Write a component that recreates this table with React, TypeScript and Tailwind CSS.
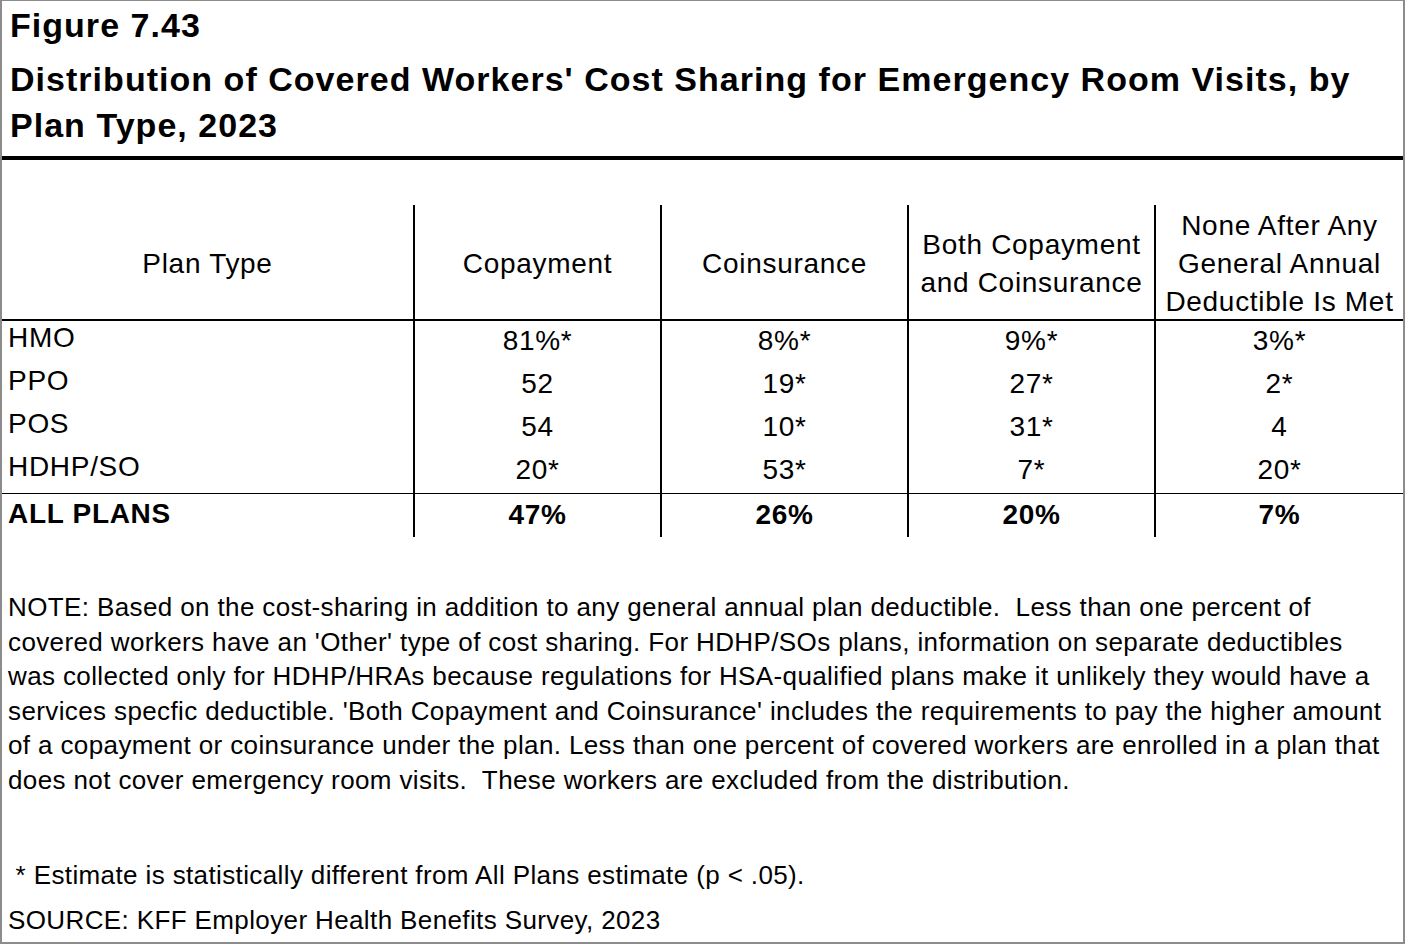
import React from "react";

const rows = [
  { plan: "HMO", cells: ["81%*", "8%*", "9%*", "3%*"] },
  { plan: "PPO", cells: ["52", "19*", "27*", "2*"] },
  { plan: "POS", cells: ["54", "10*", "31*", "4"] },
  { plan: "HDHP/SO", cells: ["20*", "53*", "7*", "20*"] },
];

const totals = ["47%", "26%", "20%", "7%"];

const App = () => {
  return (
    <div className="w-[1405px] h-[944px] bg-white border-l-2 border-r-2 border-t border-b-2 border-[#8c8c8c] font-['Liberation_Sans',Arial,sans-serif] text-black overflow-hidden">
      <div className="pl-[8px] pt-[4px] font-bold text-[34px] tracking-[1.03px]">
        <p className="leading-[40px]">Figure 7.43</p>
        <p className="mt-[11px] leading-[46px]">
          Distribution of Covered Workers' Cost Sharing for Emergency Room Visits, by
          <br />
          Plan Type, 2023
        </p>
      </div>
      <div className="mt-[8px] h-[4px] bg-black" />

      <div className="mt-[45px] grid grid-cols-[411px_247px_247px_247px_1fr] text-[28px] tracking-[0.7px]">
        {/* header */}
        <div className="h-[116px] border-b-2 border-black flex items-center justify-center leading-[38px] pt-[4px]">
          Plan Type
        </div>
        <div className="h-[116px] border-b-2 border-l-2 border-black flex items-center justify-center leading-[38px] pt-[4px]">
          Copayment
        </div>
        <div className="h-[116px] border-b-2 border-l-2 border-black flex items-center justify-center leading-[38px] pt-[4px]">
          Coinsurance
        </div>
        <div className="h-[116px] border-b-2 border-l-2 border-black flex items-center justify-center text-center leading-[38px] pt-[4px]">
          Both Copayment
          <br />
          and Coinsurance
        </div>
        <div className="h-[116px] border-b-2 border-l-2 border-black flex items-center justify-center text-center leading-[38px] pt-[4px]">
          None After Any
          <br />
          General Annual
          <br />
          Deductible Is Met
        </div>

        {rows.map((r) => (
          <React.Fragment key={r.plan}>
            <div className="h-[43px] flex items-center pl-[6px] pb-[10px] leading-[32px]">{r.plan}</div>
            {r.cells.map((c, i) => (
              <div
                key={i}
                className="h-[43px] border-l-2 border-black flex items-center justify-center pb-[4px] leading-[32px]"
              >
                {c}
              </div>
            ))}
          </React.Fragment>
        ))}

        <div className="h-[44px] border-t border-black flex items-center pl-[6px] pb-[4px] font-bold leading-[32px]">
          ALL PLANS
        </div>
        {totals.map((t, i) => (
          <div
            key={i}
            className="h-[44px] border-t border-l-2 border-black flex items-center justify-center pb-[2px] font-bold leading-[32px]"
          >
            {t}
          </div>
        ))}
      </div>

      <div className="mt-[53px] pl-[6px] pr-[4px] text-[26px] tracking-[0.38px] leading-[34.5px] whitespace-nowrap">
        <p>
          NOTE: Based on the cost-sharing in addition to any general annual plan deductible.&nbsp; Less than one percent of
          <br />
          covered workers have an 'Other' type of cost sharing. For HDHP/SOs plans, information on separate deductibles
          <br />
          was collected only for HDHP/HRAs because regulations for HSA-qualified plans make it unlikely they would have a
          <br />
          services specfic deductible. 'Both Copayment and Coinsurance' includes the requirements to pay the higher amount
          <br />
          of a copayment or coinsurance under the plan. Less than one percent of covered workers are enrolled in a plan that
          <br />
          does not cover emergency room visits.&nbsp; These workers are excluded from the distribution.
        </p>
        <p className="mt-[61px]">&nbsp;* Estimate is statistically different from All Plans estimate (p &lt; .05).</p>
        <p className="mt-[10.5px]">SOURCE: KFF Employer Health Benefits Survey, 2023</p>
      </div>
    </div>
  );
};

export default App;
